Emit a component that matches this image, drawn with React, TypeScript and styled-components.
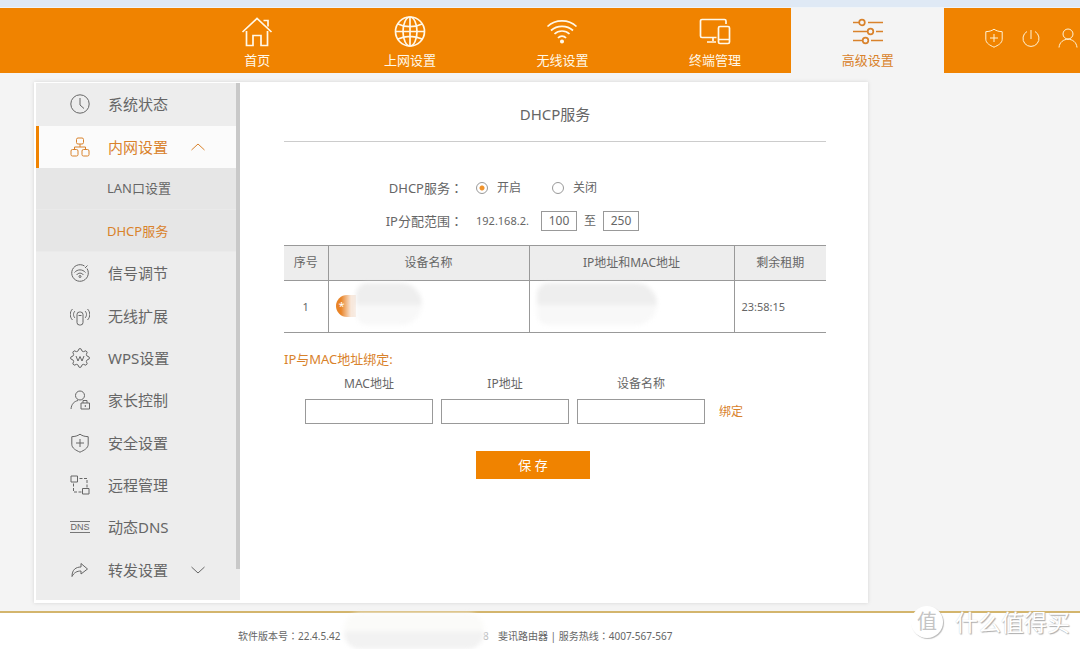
import React from 'react';
import styled, { createGlobalStyle, css } from 'styled-components';

const ORANGE = '#f08300';
const ACCENT = '#d9822b';

const GlobalStyle = createGlobalStyle`
  * { box-sizing: border-box; }
  body {
    margin: 0;
    background: #f4f4f4;
    color: #666;
    font: 12px/18px "Noto Sans", "Noto Sans CJK SC", sans-serif;
    overflow-x: hidden;
  }
  ul { list-style: none; margin: 0; padding: 0; }
  a { color: inherit; text-decoration: none; }
  button, input { font: inherit; color: inherit; }
`;

const Page = styled.div`
  display: flex;
  flex-direction: column;
  min-height: 100vh;
`;

const TopStrip = styled.div`
  height: 8px;
  background: #dfe9f5;
  border-bottom: 1px solid #f0f4f8;
`;

const Header = styled.header`
  display: flex;
  height: 65px;
  padding-left: 181px;
  background: ${ORANGE};
`;

const Nav = styled.nav`
  flex: 0 1 763px;
  display: grid;
  grid-template-columns: repeat(5, 1fr);
`;

const NavLink = styled.a<{ $active?: boolean }>`
  display: flex;
  flex-direction: column;
  align-items: center;
  padding-top: 7px;
  gap: 4px;
  font-size: 13px;
  color: #fff8e8;
  ${(p) => p.$active && css`
    background: #f4f4f4;
    color: ${ACCENT};
  `}
`;

const HeaderTools = styled.div`
  flex: 1;
  display: flex;
  align-items: center;
  justify-content: flex-end;
  gap: 17px;
  padding: 0 2px 5px 0;
`;

const ToolButton = styled.button`
  display: flex;
  padding: 0;
  border: 0;
  background: none;
  color: #fff3d6;
`;

const Icon = styled.svg<{ $size: number }>`
  display: block;
  flex: none;
  width: ${(p) => p.$size}px;
  height: ${(p) => p.$size}px;
  fill: none;
  stroke: currentColor;
`;

const Card = styled.div`
  display: flex;
  max-width: 834px;
  width: calc(100% - 68px);
  margin: 9px 0 8px 34px;
  padding: 1px 0 3px 2px;
  background: #fff;
  box-shadow: 0 0 4px rgba(0, 0, 0, 0.13);
`;

const Sidebar = styled.aside`
  flex: 0 0 204px;
  display: flex;
  align-items: flex-start;
  padding-bottom: 9px;
  background: #ededed;
`;

const Menu = styled.ul`
  flex: 1;
  display: grid;
  grid-auto-rows: 1fr;
  min-height: 508px;
`;

const MenuItem = styled.li`
  display: grid;
`;

const MenuLink = styled.a<{ $active?: boolean }>`
  display: flex;
  align-items: center;
  gap: 18px;
  padding-left: 31px;
  border-left: 3px solid transparent;
  font-size: 15px;
  ${(p) => p.$active && css`
    margin-top: 1px;
    border-color: ${ORANGE};
    background: #fbfbfb;
    color: ${ACCENT};
  `}
`;

const SubLink = styled.a<{ $active?: boolean }>`
  display: flex;
  align-items: center;
  padding-left: 71px;
  background: #e6e6e6;
  border-bottom: 1px solid #eaeaea;
  font-size: 13px;
  color: ${(p) => (p.$active ? ACCENT : 'inherit')};
`;

const ScrollThumb = styled.div`
  width: 4px;
  height: 486px;
  background: #c9c9c9;
`;

const Content = styled.main`
  flex: 1;
  min-width: 0;
  padding: 0 42px 0 44px;
`;

const Title = styled.h1`
  height: 59px;
  margin: 0 0 34px;
  padding-top: 6px;
  border-bottom: 1px solid #ccc;
  font-size: 15px;
  font-weight: 400;
  line-height: 50px;
  text-align: center;
`;

const FormRow = styled.div`
  display: flex;
  align-items: center;
  height: 24px;
  margin-bottom: 9px;
`;

const FormLabel = styled.span`
  width: 179px;
  margin-right: 13px;
  font-size: 13px;
  text-align: right;
`;

const Colon = styled.span`
  font-family: "Noto Sans CJK TC", sans-serif;
  line-height: 1;
`;

const RadioLabel = styled.label`
  display: flex;
  align-items: center;
  gap: 9px;
  width: 76px;
`;

const Radio = styled.input`
  appearance: none;
  width: 12px;
  height: 12px;
  margin: 0;
  border: 1px solid #999;
  border-radius: 50%;
  background: #fff;
  &:checked { background: radial-gradient(circle, #f0932c 0 2px, #fff 3px); }
`;

const Prefix = styled.span`
  width: 65px;
  font-size: 11px;
`;

const RangeInput = styled.input`
  width: 36px;
  height: 20px;
  padding: 0 0 2px;
  border: 1px solid #999;
  font-size: 12px;
  text-align: center;
`;

const RangeWord = styled.span`
  width: 26px;
  text-align: center;
`;

const Table = styled.table`
  width: 100%;
  margin-top: 12px;
  border-collapse: collapse;
  table-layout: fixed;
`;

const HeadCell = styled.th<{ $width?: number }>`
  width: ${(p) => (p.$width ? `${p.$width}px` : 'auto')};
  height: 35px;
  padding: 0;
  border: 1px solid #999;
  border-width: 1px 0 1px 1px;
  background: #ededed;
  font-weight: 400;
  &:first-child { border-left: 0; }
`;

const Cell = styled.td<{ $center?: boolean }>`
  height: 52px;
  padding: 0 7px;
  border: 1px solid #999;
  border-width: 1px 0 1px 1px;
  font-size: 11px;
  text-align: ${(p) => (p.$center ? 'center' : 'left')};
  &:first-child { border-left: 0; }
`;

const MaskedValue = styled.div`
  display: flex;
  align-items: center;
  height: 44px;
  margin-top: -6px;
`;

const Mask = styled.span<{ $width: number }>`
  width: ${(p) => p.$width}px;
  height: 42px;
  border-radius: 14px 26px 26px 14px;
  background: linear-gradient(#eeeeee 50%, #f8f8f8 54%);
  filter: blur(2px);
`;

const DeviceMark = styled.span`
  width: 20px;
  height: 22px;
  margin-top: 5px;
  border-radius: 11px 0 0 11px;
  background: linear-gradient(90deg, #e98427 25%, #f8e8dc 75%);
  color: #fff;
  line-height: 22px;
  padding-left: 3px;
`;

const SectionTitle = styled.h2`
  margin: 17px 0 7px;
  font-size: 13px;
  font-weight: 400;
  line-height: 18px;
  color: ${ACCENT};
`;

const BindRow = styled.div`
  display: flex;
  align-items: flex-end;
  gap: 8px;
  padding-left: 21px;
`;

const BindField = styled.label`
  display: flex;
  flex: 0 1 128px;
  min-width: 0;
  flex-direction: column;
  gap: 6px;
  text-align: center;
`;

const BindInput = styled.input`
  width: 100%;
  height: 25px;
  border: 1px solid #999;
  background: #fff;
`;

const BindLink = styled.a`
  margin: 0 0 3px 6px;
  color: ${ACCENT};
`;

const SaveButton = styled.button`
  display: block;
  width: 114px;
  height: 28px;
  margin: 27px 0 0 192px;
  padding: 0;
  border: 0;
  background: ${ORANGE};
  color: #fff;
  font-size: 13px;
`;

const Footer = styled.footer`
  position: relative;
  flex: 1;
  display: flex;
  min-height: 38px;
  padding: 14px 0 4px 238px;
  border-top: 2px solid #d3b56d;
  background: #fff;
  font-size: 10px;
`;

const Version = styled.span`
  width: 106px;
`;

const FooterMask = styled.span`
  width: 140px;
  height: 36px;
  margin: -14px 0;
  border-radius: 16px;
  background: linear-gradient(#fbfbf9 18px, #f2f2f2 19px);
  filter: blur(2px);
`;

const Digit = styled.span`
  width: 15px;
  margin-left: -1px;
  color: #bbb;
`;

const Watermark = styled.div`
  position: absolute;
  right: 10px;
  top: -8px;
  display: flex;
  align-items: center;
  gap: 12px;
  color: #fff;
  font-size: 23px;
  line-height: 34px;
  text-shadow: 1px 1px 1px #aaa, 0 0 1px #ccc;
`;

const WatermarkBadge = styled.span`
  width: 32px;
  height: 32px;
  border-radius: 50%;
  background: #fff;
  box-shadow: 1px 1px 1px #bbb;
  color: #c4c4c4;
  font-size: 20px;
  line-height: 32px;
  text-align: center;
  text-shadow: none;
`;

const gearPoints = Array.from({ length: 32 }, (_, i) => {
  const radius = i % 4 < 2 ? 9.3 : 7.2;
  const angle = ((i - 0.5) * Math.PI) / 16;
  return `${10 + radius * Math.cos(angle)},${10 + radius * Math.sin(angle)}`;
}).join(' ');

const drawings: Record<string, React.ReactNode> = {
  home: <path d="M1.500 17 16 3.500l14.500 13.500M5.500 16v14.500h6.500V20.500h8v10h6.500V16M22.500 5.500h4.500v6" />,
  globe: <><circle cx="16" cy="16.500" r="14.500" /><ellipse cx="16" cy="16.500" rx="7" ry="14.500" /><path d="M16 2v29M1.500 16.500h29M4 9c7 3.500 17 3.500 24 0M4 24c7-3.500 17-3.500 24 0" /></>,
  wifi: <><path d="M1.500 11.500c8-7.500 21-7.500 29 0M5 15.500c6-5.500 16-5.500 22 0M8.500 19c4-4 11-4 15 0M12 23c2-2.500 6-2.500 8 0" /><circle cx="16" cy="26.500" r="1.200" fill="currentColor" /></>,
  devices: <path d="M17.500 22.500H3a1.500 1.500 0 0 1-1.500-1.500V6A1.500 1.500 0 0 1 3 4.500h22.500A1.500 1.500 0 0 1 27 6v3M14 22.500V26M8 27h9M21 11.500h8a1.500 1.500 0 0 1 1.500 1.500v14a1.500 1.500 0 0 1-1.500 1.500h-8a1.500 1.500 0 0 1-1.500-1.500V13a1.500 1.500 0 0 1 1.500-1.500ZM19.500 24.500h11" />,
  sliders: <><path d="M1 7.500h6M16 7.500h15M1 16.500h14M24 16.500h7M1 25.500h9M19 25.500h12" /><circle cx="10" cy="7.500" r="2.800" /><circle cx="18.500" cy="16.500" r="2.800" /><circle cx="13.500" cy="25.500" r="2.800" /></>,
  shield: <path d="M10 1.200C7.500 3 5 3.500 1.800 3.700v7.500c0 4 4 6 8.200 8 4.200-2 8.200-4 8.200-8V3.700C15 3.500 12.500 3 10 1.200ZM10 6v8M6 10h8" />,
  power: <path d="M10 2v9M6 3.500a8 8 0 1 0 8 0" />,
  user: <><circle cx="10" cy="6" r="5" /><path d="M1 19.500c1-11 17-11 18 0" /></>,
  clock: <><circle cx="10" cy="10" r="9.200" /><path d="M10 4v7l4 3.500" /></>,
  lan: <><rect x="6.500" y="1" width="7" height="6" rx="1.500" /><rect x="1" y="12.500" width="7" height="6.500" rx="1.500" /><rect x="12" y="12.500" width="7" height="6.500" rx="1.500" /><path d="M10 7v3M4.500 12.500V10h11v2.500" /></>,
  signal: <><path d="M14.500 3A8.300 8.300 0 1 0 17 5.500M15 5l2.500-2.500M4.500 9.500c3-3.500 8-3.500 11 0M6.500 12c2-2.500 5-2.500 7 0" /><circle cx="10" cy="13.500" r="1" /></>,
  extend: <><rect x="7" y="6" width="6" height="13" rx="2.500" /><path d="M8.500 9.500h3M5 5c-2 2-2 5 0 7M2.500 3c-3 3-3 8 0 11M15 5c2 2 2 5 0 7M17.500 3c3 3 3 8 0 11" /></>,
  wps: <><polygon points={gearPoints} /><path d="m6 8 2 5 2-4.500 2 4.500 2-5" /></>,
  parent: <><circle cx="10" cy="5.500" r="4.500" /><path d="M1 19c.5-5 3-7.500 7-8.500M11 13h8.500v6H11ZM13 13v-2.500h4V13M15.300 15v2" /></>,
  remote: <><path d="M1 1h6.500v6H1ZM12.500 13.500H19v5.500h-6.500Z" /><path d="M9.500 3.500H17v10M3.500 8.500V17h8" strokeDasharray="3 1.500" /></>,
  share: <path d="M2 16.500c0-7 4-9.500 9-9.500V3.500l6.500 5.500-6.500 5v-3c-4 0-7 1.500-9 5.500Z" />,
  up: <path d="m3.500 13 6.500-6 6.500 6" />,
  down: <path d="m3.500 7 6.500 6 6.500-6" />,
};

function Glyph({ name, size = 20 }: { name: string; size?: number }) {
  const box = size > 20 ? 32 : 20;
  return (
    <Icon $size={size} viewBox={`0 0 ${box} ${box}`} strokeWidth={size > 20 ? 1.7 : 1} aria-hidden="true">
      {drawings[name]}
    </Icon>
  );
}

const DnsMark = styled.span`
  width: 20px;
  border: 1px solid #777;
  border-width: 1px 0;
  font: 9px/10px "Liberation Sans", sans-serif;
  text-align: center;
`;

const MenuText = styled.span`
  min-width: 62px;
`;

const navItems = [
  ['home', '首页'],
  ['globe', '上网设置'],
  ['wifi', '无线设置'],
  ['devices', '终端管理'],
  ['sliders', '高级设置'],
];

type Entry = { label: string; icon?: string; active?: boolean; arrow?: string };

const menu: Entry[] = [
  { label: '系统状态', icon: 'clock' },
  { label: '内网设置', icon: 'lan', active: true, arrow: 'up' },
  { label: 'LAN口设置' },
  { label: 'DHCP服务', active: true },
  { label: '信号调节', icon: 'signal' },
  { label: '无线扩展', icon: 'extend' },
  { label: 'WPS设置', icon: 'wps' },
  { label: '家长控制', icon: 'parent' },
  { label: '安全设置', icon: 'shield' },
  { label: '远程管理', icon: 'remote' },
  { label: '动态DNS', icon: 'dns' },
  { label: '转发设置', icon: 'share', arrow: 'down' },
];

export default function App() {
  return (
    <>
      <GlobalStyle />
      <Page>
        <TopStrip />
        <Header>
          <Nav>
            {navItems.map(([icon, label]) => (
              <NavLink key={icon} href="#" $active={icon === 'sliders'}>
                <Glyph name={icon} size={32} />
                {label}
              </NavLink>
            ))}
          </Nav>
          <HeaderTools>
            <ToolButton aria-label="安全"><Glyph name="shield" /></ToolButton>
            <ToolButton aria-label="重启"><Glyph name="power" /></ToolButton>
            <ToolButton aria-label="账户"><Glyph name="user" /></ToolButton>
          </HeaderTools>
        </Header>
        <Card>
          <Sidebar>
            <Menu>
              {menu.map((m) => (
                <MenuItem key={m.label}>
                  {m.icon ? (
                    <MenuLink href="#" $active={m.active}>
                      {m.icon === 'dns' ? <DnsMark>DNS</DnsMark> : <Glyph name={m.icon} />}
                      <MenuText>{m.label}</MenuText>
                      {m.arrow && <Glyph name={m.arrow} />}
                    </MenuLink>
                  ) : (
                    <SubLink href="#" $active={m.active}>{m.label}</SubLink>
                  )}
                </MenuItem>
              ))}
            </Menu>
            <ScrollThumb />
          </Sidebar>
          <Content>
            <Title>DHCP服务</Title>
            <FormRow role="radiogroup" aria-labelledby="dhcp-label">
              <FormLabel id="dhcp-label">DHCP服务<Colon>：</Colon></FormLabel>
              <RadioLabel><Radio type="radio" name="dhcp" defaultChecked />开启</RadioLabel>
              <RadioLabel><Radio type="radio" name="dhcp" />关闭</RadioLabel>
            </FormRow>
            <FormRow>
              <FormLabel as="label" htmlFor="range-start">IP分配范围<Colon>：</Colon></FormLabel>
              <Prefix>192.168.2.</Prefix>
              <RangeInput id="range-start" defaultValue="100" />
              <RangeWord as="label" htmlFor="range-end">至</RangeWord>
              <RangeInput id="range-end" defaultValue="250" />
            </FormRow>
            <Table>
              <thead>
                <tr>
                  <HeadCell $width={44}>序号</HeadCell>
                  <HeadCell>设备名称</HeadCell>
                  <HeadCell $width={205}>IP地址和MAC地址</HeadCell>
                  <HeadCell $width={92}>剩余租期</HeadCell>
                </tr>
              </thead>
              <tbody>
                <tr>
                  <Cell $center>1</Cell>
                  <Cell><MaskedValue><DeviceMark>*</DeviceMark><Mask $width={66} /></MaskedValue></Cell>
                  <Cell><MaskedValue><Mask $width={120} /></MaskedValue></Cell>
                  <Cell>23:58:15</Cell>
                </tr>
              </tbody>
            </Table>
            <SectionTitle>IP与MAC地址绑定:</SectionTitle>
            <BindRow>
              {['MAC地址', 'IP地址', '设备名称'].map((label) => (
                <BindField key={label}>{label}<BindInput /></BindField>
              ))}
              <BindLink href="#">绑定</BindLink>
            </BindRow>
            <SaveButton>保 存</SaveButton>
          </Content>
        </Card>
        <Footer>
          <Version>软件版本号<Colon>：</Colon>22.4.5.42</Version>
          <FooterMask />
          <Digit>8</Digit>
          <span>斐讯路由器 | 服务热线<Colon>：</Colon>4007-567-567</span>
          <Watermark><WatermarkBadge>值</WatermarkBadge>什么值得买</Watermark>
        </Footer>
      </Page>
    </>
  );
}
